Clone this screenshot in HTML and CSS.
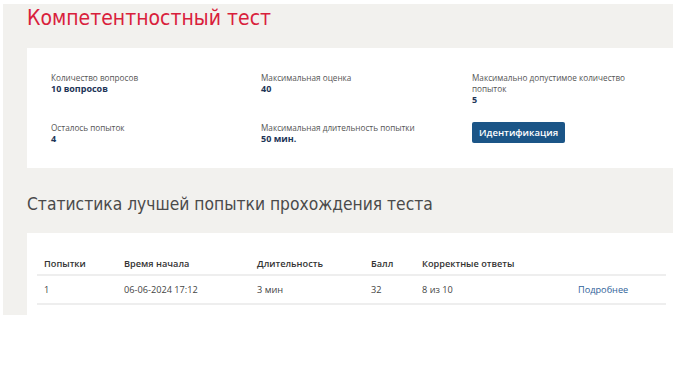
FILE: index.html
```html
<!DOCTYPE html>
<html lang="ru">
<head>
    <meta charset="UTF-8">
    <meta name="viewport" content="width=device-width, initial-scale=1.0">
    <title>Компетентностный тест</title>
    <link rel="stylesheet" href="styles.css">
</head>
<body>
    <div class="panel">
        <h1 class="title">Компетентностный тест</h1>

        <div class="card info-card">
            <div class="info-grid">
                <div class="info-item">
                    <span class="info-label">Количество вопросов</span>
                    <span class="info-value">10 вопросов</span>
                </div>
                <div class="info-item">
                    <span class="info-label">Максимальная оценка</span>
                    <span class="info-value">40</span>
                </div>
                <div class="info-item">
                    <span class="info-label">Максимально допустимое количество попыток</span>
                    <span class="info-value">5</span>
                </div>
                <div class="info-item">
                    <span class="info-label">Осталось попыток</span>
                    <span class="info-value">4</span>
                </div>
                <div class="info-item">
                    <span class="info-label">Максимальная длительность попытки</span>
                    <span class="info-value">50 мин.</span>
                </div>
                <div class="info-item">
                    <button class="button">Идентификация</button>
                </div>
            </div>
        </div>

        <h2 class="subtitle">Статистика лучшей попытки прохождения теста</h2>

        <div class="card table-card">
            <table class="stats">
                <thead>
                    <tr>
                        <th class="col-try">Попытки</th>
                        <th class="col-start">Время начала</th>
                        <th class="col-dur">Длительность</th>
                        <th class="col-score">Балл</th>
                        <th class="col-correct">Корректные ответы</th>
                        <th class="col-link"></th>
                    </tr>
                </thead>
                <tbody>
                    <tr>
                        <td>1</td>
                        <td>06-06-2024 17:12</td>
                        <td>3 мин</td>
                        <td>32</td>
                        <td>8 из 10</td>
                        <td><a href="#" class="more">Подробнее</a></td>
                    </tr>
                </tbody>
            </table>
        </div>
    </div>
</body>
</html>
```

FILE: styles.css
```css
body {
    margin: 0;
    background: white;
    font-family: "Open Sans", "Noto Sans", sans-serif;
}

.panel {
    width: 646px;
    margin: 4px 0 0 3px;
    padding-left: 24px;
    background: #f2f1ee;
}

.title {
    margin: 0;
    height: 44px;
    padding-top: 1px;
    box-sizing: border-box;
    font-family: "DejaVu Sans Condensed", "Liberation Sans Narrow", sans-serif;
    font-size: 21px;
    font-weight: normal;
    line-height: 26px;
    color: #d9203b;
}

.card {
    background: white;
}

.info-card {
    padding: 24px 0 23px 24px;
}

.info-grid {
    display: grid;
    grid-template-columns: 210px 211px 170px;
    row-gap: 16px;
}

.info-item {
    display: flex;
    flex-direction: column;
    align-items: flex-start;
}

.info-label {
    font-size: 8.2px;
    line-height: 11px;
    color: #555;
}

.info-value {
    font-size: 9px;
    font-weight: bold;
    line-height: 12px;
    color: #1d3557;
}

.button {
    height: 21px;
    padding: 0 7px;
    border: none;
    border-radius: 2px;
    background: #1b5587;
    color: white;
    font-family: "Open Sans", "Noto Sans", sans-serif;
    font-size: 9.5px;
    font-weight: 600;
    cursor: pointer;
}

.subtitle {
    margin: 0;
    padding: 24px 0 17px;
    font-family: "DejaVu Sans Condensed", "Liberation Sans Narrow", sans-serif;
    font-size: 17.3px;
    font-weight: normal;
    line-height: 24px;
    color: #4a4a4a;
}

.table-card {
    padding: 19px 7px 10px 10px;
}

.stats {
    width: 100%;
    border-collapse: collapse;
    font-size: 9.2px;
    color: #444;
}

.stats th {
    height: 22px;
    padding: 0 0 0 7px;
    text-align: left;
    font-weight: 600;
    color: #333;
    border-bottom: 2px solid #eeeeee;
}

.stats td {
    height: 27px;
    padding: 0 0 0 7px;
    border-bottom: 2px solid #eeeeee;
}

.col-try { width: 73px; }
.col-start { width: 126px; }
.col-dur { width: 107px; }
.col-score { width: 44px; }
.col-correct { width: 149px; }

.more {
    color: #2f6299;
    text-decoration: none;
}
```
